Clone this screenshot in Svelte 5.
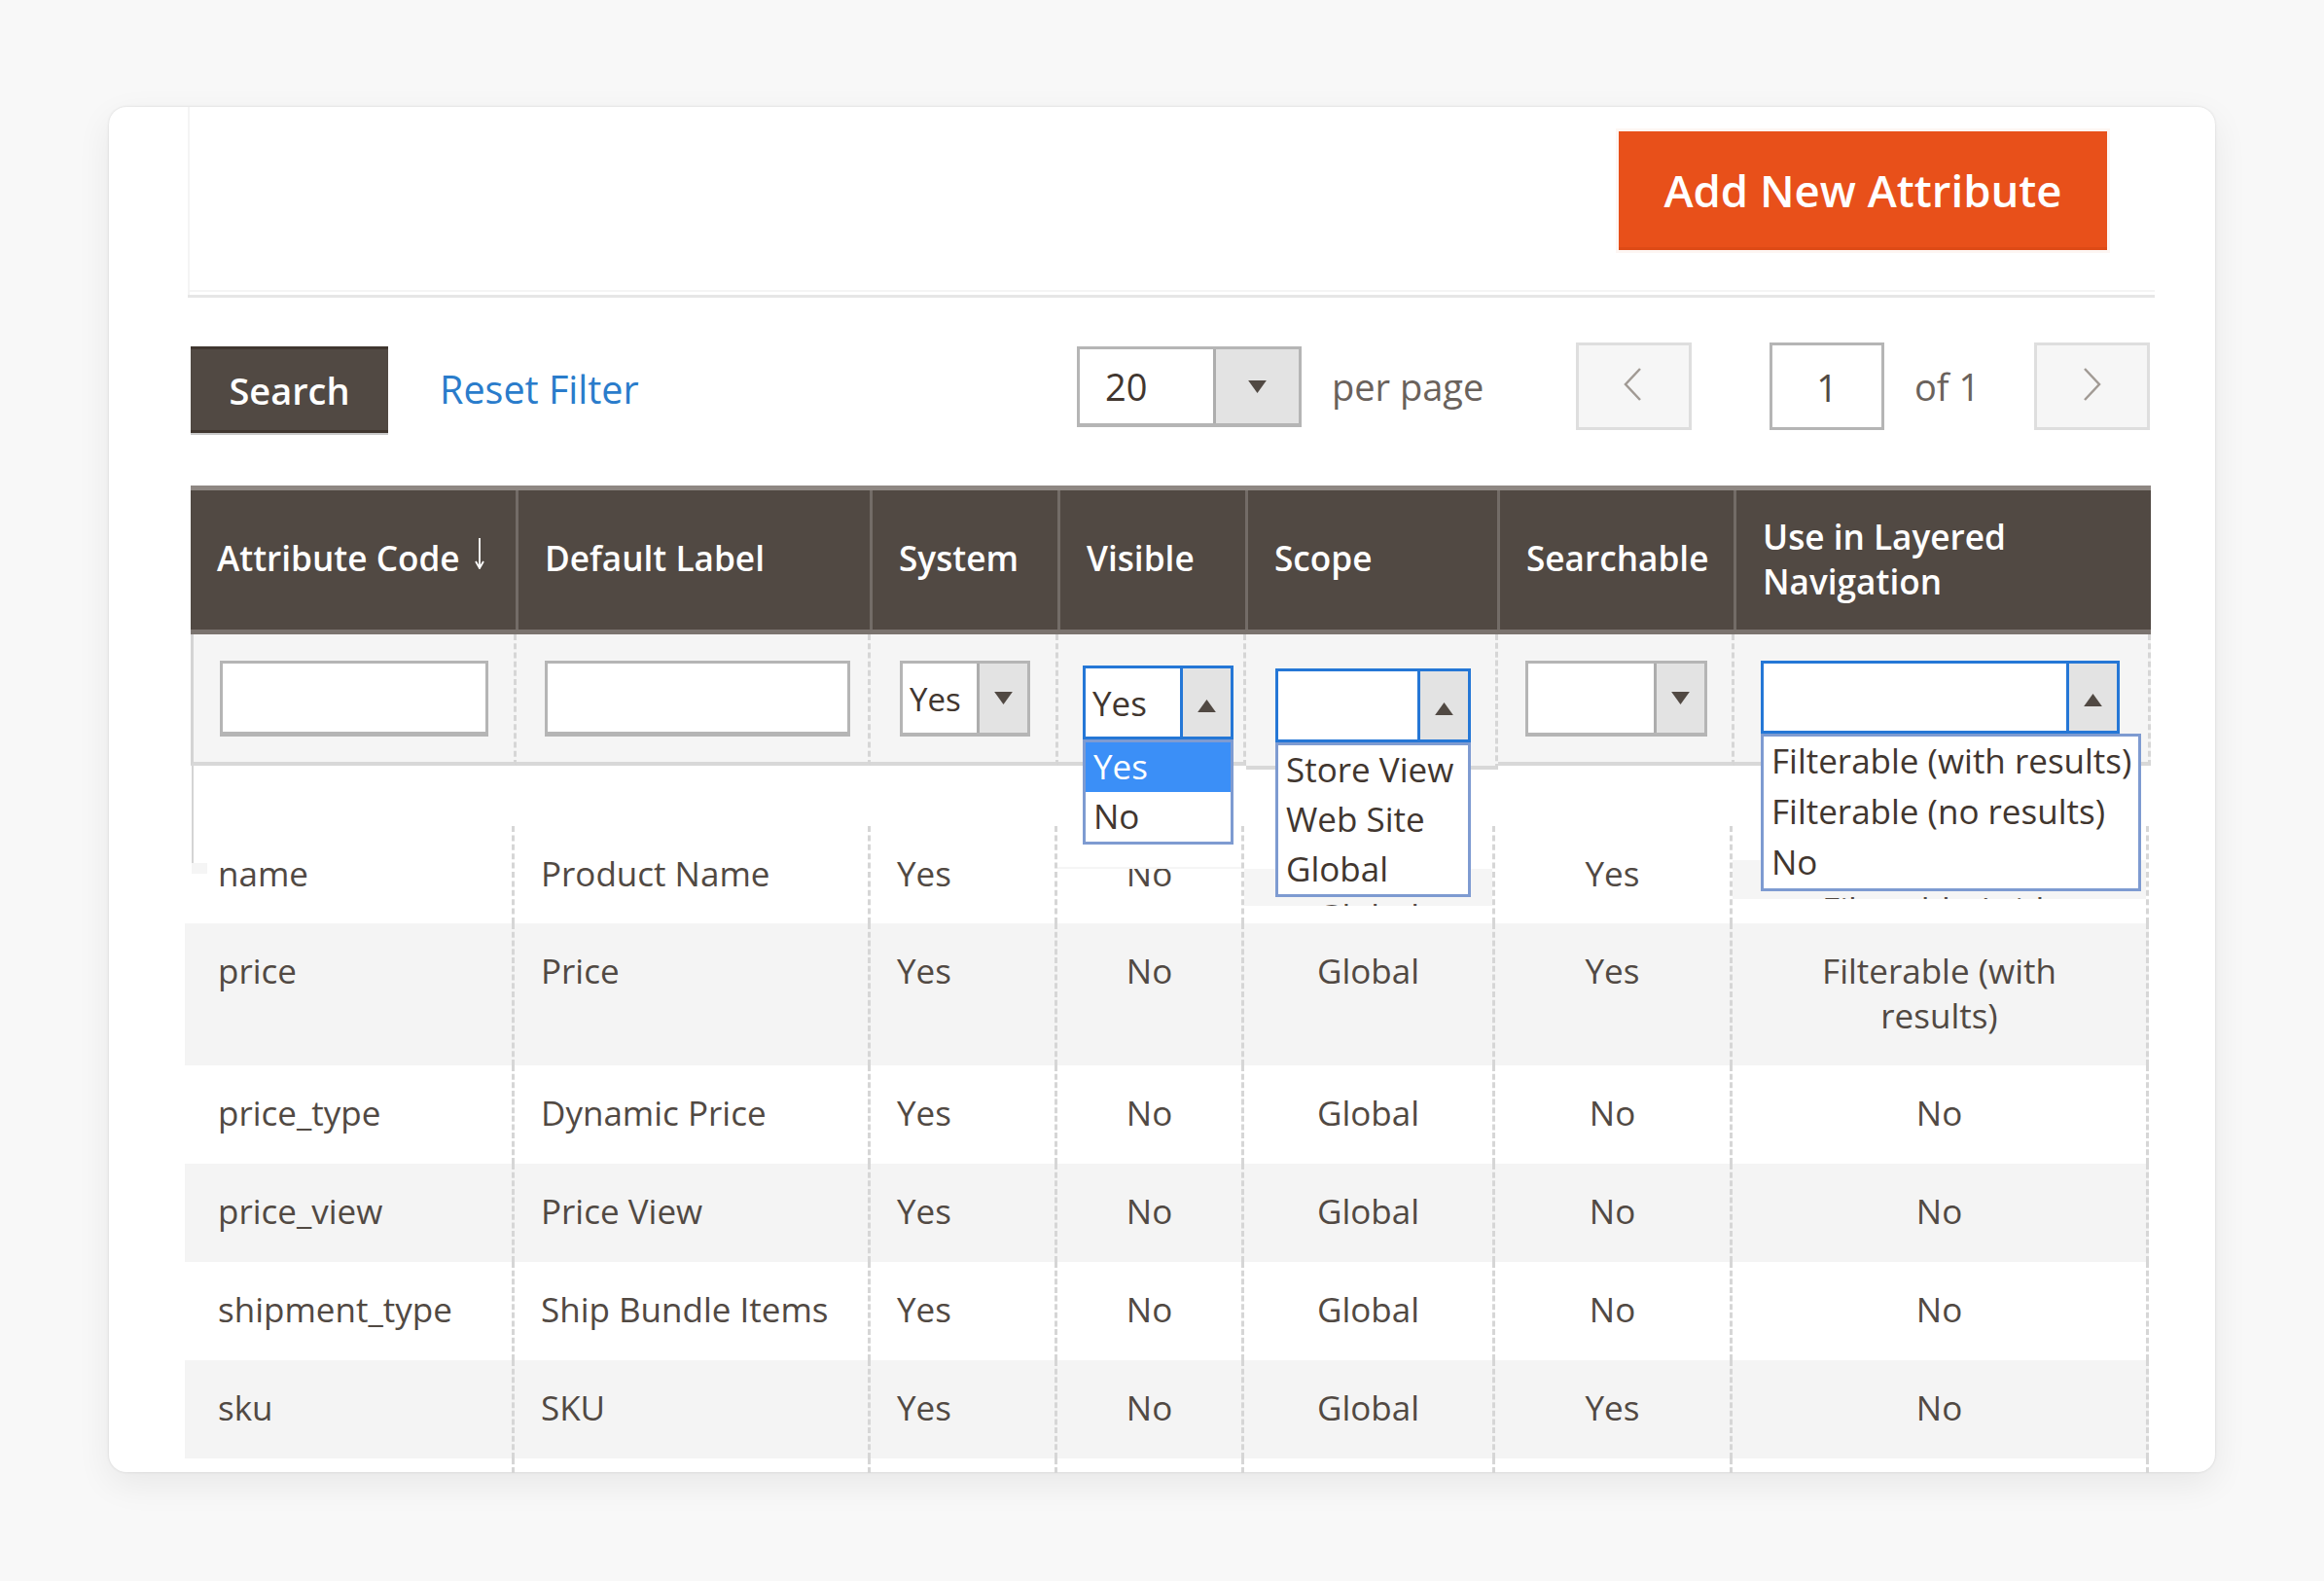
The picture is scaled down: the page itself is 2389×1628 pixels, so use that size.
<script>
  const columns = ['price', 'Price', 'Yes', 'No', 'Global', 'Yes', 'Filterable (with results)'];
  const rows = [
    { cls: 'r-price', cells: columns },
    { cls: 'r-std', cells: ['price_type', 'Dynamic Price', 'Yes', 'No', 'Global', 'No', 'No'] },
    { cls: 'r-std alt', cells: ['price_view', 'Price View', 'Yes', 'No', 'Global', 'No', 'No'] },
    { cls: 'r-std', cells: ['shipment_type', 'Ship Bundle Items', 'Yes', 'No', 'Global', 'No', 'No'] },
    { cls: 'r-std alt', cells: ['sku', 'SKU', 'Yes', 'No', 'Global', 'Yes', 'No'] }
  ];
</script>

{#snippet tri(up)}
  <svg class="tri" viewBox="0 0 22 16" aria-hidden="true">
    {#if up}<path d="M11 1 L21 15 H1 Z" />{:else}<path d="M1 1 H21 L11 15 Z" />{/if}
  </svg>
{/snippet}

<div class="page">
  <div class="card">
    <div class="head">
      <button class="add">Add New Attribute</button>
    </div>

    <div class="toolbar">
      <button class="search">Search</button>
      <span class="reset">Reset Filter</span>
      <div class="sel s-page">
        <span class="val">20</span>
        <span class="arrow">{@render tri(false)}</span>
      </div>
      <span class="perpage">per page</span>
      <span class="pager prev">
        <svg viewBox="0 0 20 34" aria-hidden="true"><path d="M18 1 L3 17 L18 33" /></svg>
      </span>
      <span class="pagenum">1</span>
      <span class="of">of 1</span>
      <span class="pager next">
        <svg viewBox="0 0 20 34" aria-hidden="true"><path d="M2 1 L17 17 L2 33" /></svg>
      </span>
    </div>

    <div class="grid thead">
      <div class="th">
        Attribute Code
        <svg class="sort" viewBox="0 0 12 32" aria-hidden="true"><path d="M6 0 V30 M2 24 L6 31 L10 24" /></svg>
      </div>
      <div class="th">Default Label</div>
      <div class="th">System</div>
      <div class="th">Visible</div>
      <div class="th">Scope</div>
      <div class="th">Searchable</div>
      <div class="th">Use in Layered<br />Navigation</div>
    </div>

    <div class="grid filters">
      <div class="fc f1"><span class="input i1"></span></div>
      <div class="fc f2"><span class="input i2"></span></div>
      <div class="fc f3">
        <div class="sel s-system"><span class="val">Yes</span><span class="arrow">{@render tri(false)}</span></div>
      </div>
      <div class="fc f4">
        <div class="sel open s-visible">
          <span class="val">Yes</span><span class="arrow">{@render tri(true)}</span>
          <ul class="drop">
            <li class="on">Yes</li>
            <li>No</li>
          </ul>
        </div>
      </div>
      <div class="fc f5">
        <div class="sel open s-scope">
          <span class="val"></span><span class="arrow">{@render tri(true)}</span>
          <ul class="drop">
            <li>Store View</li>
            <li>Web Site</li>
            <li>Global</li>
          </ul>
        </div>
      </div>
      <div class="fc f6">
        <div class="sel s-search"><span class="val"></span><span class="arrow">{@render tri(false)}</span></div>
      </div>
      <div class="fc f7">
        <div class="sel open s-layered">
          <span class="val"></span><span class="arrow">{@render tri(true)}</span>
          <ul class="drop">
            <li>Filterable (with results)</li>
            <li>Filterable (no results)</li>
            <li>No</li>
          </ul>
        </div>
      </div>
    </div>

    <div class="tbody">
      <div class="grid row r-first">
        <div class="td">name</div>
        <div class="td">Product Name</div>
        <div class="td">Yes</div>
        <div class="td ctr clipped"><span class="cover"></span>No</div>
        <div class="td ctr"><span class="band band-scope"><span>Global</span></span></div>
        <div class="td ctr">Yes</div>
        <div class="td ctr"><span class="band band-layer"><span>Filterable (with</span></span></div>
      </div>
      {#each rows as row}
        <div class="grid row {row.cls}">
          {#each row.cells as cell, i}
            <div class="td" class:ctr={i > 2}>{cell}</div>
          {/each}
        </div>
      {/each}
      <div class="grid row r-end">
        {#each columns as _}
          <div class="td"></div>
        {/each}
      </div>
    </div>
  </div>
</div>

<style>
  :global(body) {
    margin: 0;
    background: #fff;
  }
  .page {
    box-sizing: border-box;
    width: 2389px;
    height: 1625px;
    padding: 110px 0 0 112px;
    background: #f8f8f8;
    font-family: "Open Sans", "Liberation Sans", sans-serif;
    font-size: 35px;
    color: #514943;
    overflow: hidden;
  }
  .card {
    box-sizing: border-box;
    width: 2165px;
    height: 1403px;
    background: #fff;
    border-radius: 18px;
    box-shadow: 0 0 3px rgba(0, 0, 0, 0.12), 0 12px 36px rgba(0, 0, 0, 0.07);
  }
  .head {
    box-sizing: border-box;
    height: 196px;
    margin: 0 62px 0 81px;
    padding: 25px 49px 0 0;
    display: flex;
    justify-content: flex-end;
    align-items: flex-start;
    border-bottom: 3px solid #e6e6e6;
    box-shadow: inset 2px 0 0 #f4f4f4, inset 0 -3px 0 #fff, inset 0 -5px 0 #f4f4f4;
  }
  button {
    font-family: inherit;
    border: 0;
    padding: 0;
    color: #fff;
  }
  .add {
    width: 502px;
    height: 122px;
    background: #e8501a;
    border-bottom: 3px solid #dd4a16;
    box-shadow: 0 0 0 3px #fdf6f3;
    font-size: 45.5px;
    font-weight: 600;
  }
  .toolbar {
    height: 93px;
    margin: 46px 0 54px 84px;
    display: flex;
    align-items: flex-start;
  }
  .search {
    width: 203px;
    height: 89px;
    margin-top: 4px;
    background: #514943;
    border-top: 3px solid #40362f;
    border-bottom: 3px solid #40362f;
    box-shadow: 0 2px 0 #c9c9c9;
    font-size: 38px;
    font-weight: 600;
  }
  .reset {
    margin: 4px 0 0 53px;
    width: 655px;
    line-height: 89px;
    font-size: 39.5px;
    color: #2a7ccb;
  }
  .sel {
    box-sizing: border-box;
    position: relative;
    display: flex;
    background: #fff;
    border: 3px solid #b5b5b5;
    border-bottom-width: 4px;
    color: #41362f;
  }
  .s-page {
    width: 231px;
    height: 83px;
    margin-top: 4px;
    font-size: 38px;
  }
  .val {
    flex: 1;
    padding-left: 7px;
    line-height: 72px;
  }
  .s-page .val {
    padding-left: 26px;
    line-height: 76px;
  }
  .arrow {
    display: flex;
    align-items: center;
    justify-content: center;
    width: 49px;
    background: #e3e3e3;
    border-left: 3px solid #adadad;
  }
  .s-page .arrow {
    width: 85px;
  }
  .tri {
    width: 21px;
    height: 15px;
    fill: #514943;
  }
  .perpage {
    margin: 4px 0 0 31px;
    width: 251px;
    line-height: 83px;
    font-size: 38px;
    color: #6a625c;
  }
  .pager {
    box-sizing: border-box;
    width: 119px;
    height: 90px;
    display: flex;
    align-items: center;
    justify-content: center;
    background: #f6f6f6;
    border: 3px solid #dedede;
    padding-bottom: 4px;
  }
  .pager svg {
    width: 20px;
    height: 34px;
    fill: none;
    stroke: #a19a94;
    stroke-width: 2.5;
  }
  .prev {
    margin-right: 80px;
    padding-right: 4px;
  }
  .pagenum {
    box-sizing: border-box;
    width: 118px;
    height: 90px;
    line-height: 86px;
    text-align: center;
    background: #fff;
    border: 3px solid #b5b5b5;
    font-size: 38px;
  }
  .of {
    width: 154px;
    padding-left: 31px;
    box-sizing: border-box;
    line-height: 90px;
    font-size: 38px;
    color: #6a625c;
  }
  .grid {
    display: grid;
    grid-template-columns: 335px 364px 193px 193px 259px 243px 428px;
    margin-left: 84px;
    width: 2015px;
  }
  .thead {
    grid-template-columns: 337px 364px 193px 193px 259px 243px 426px;
    height: 153px;
    box-sizing: border-box;
    background: #514943;
    border-top: 5px solid #8e8782;
    border-bottom: 5px solid #7a736e;
  }
  .th {
    box-sizing: border-box;
    padding: 46px 0 0 27px;
    border-right: 3px solid #736c67;
    color: #fff;
    font-weight: 600;
    line-height: 46px;
    font-size: 35.2px;
    white-space: nowrap;
  }
  .th:last-child {
    padding-top: 24px;
    border-right: 0;
  }
  .sort {
    width: 12px;
    height: 32px;
    fill: none;
    stroke: #fff;
    stroke-width: 1.8;
    margin: 0 0 18px 5px;
    vertical-align: middle;
  }
  .filters {
    height: 135px;
    position: relative;
    z-index: 2;
  }
  .fc {
    box-sizing: border-box;
    padding-top: 27px;
    background: #f5f5f5;
    border-right: 3px dashed #d6d6d6;
    border-bottom: 4px solid #d8d8d8;
  }
  .fc:first-child {
    border-left: 3px solid #d4d4d4;
  }
  .f1 { padding-left: 27px; }
  .f2 { padding-left: 29px; }
  .f3 { padding-left: 30px; }
  .f4 { padding: 32px 0 0 25px; }
  .f5 { padding: 35px 0 0 30px; margin-bottom: -4px; }
  .f6 { padding-left: 28px; }
  .f7 { padding-left: 27px; }
  .input {
    box-sizing: border-box;
    display: block;
    height: 78px;
    background: #fff;
    border: 3px solid #b5b5b5;
    border-bottom-width: 5px;
  }
  .i1 { width: 276px; }
  .i2 { width: 314px; }
  .s-system { width: 134px; height: 78px; }
  .s-search { width: 187px; height: 78px; }
  .s-system, .s-system .val { font-size: 33px; }
  .s-system .val { line-height: 74px; }
  .open {
    border: 3px solid #2577d6;
    z-index: 3;
  }
  .open .arrow {
    border-left-color: #2577d6;
    padding-top: 6px;
    box-sizing: content-box;
  }
  .s-visible { width: 155px; height: 76px; }
  .s-scope { width: 201px; height: 76px; }
  .s-layered { width: 369px; height: 75px; }
  .drop {
    position: absolute;
    top: calc(100% + 3px);
    left: -3px;
    box-sizing: border-box;
    width: calc(100% + 6px);
    margin: 0;
    padding: 0;
    list-style: none;
    background: #fff;
    border: 3px solid #7e9bd1;
    font-size: 35px;
  }
  .s-layered .drop {
    width: 391px;
  }
  .drop li {
    height: 52px;
    line-height: 49px;
    padding-left: 8px;
    white-space: nowrap;
  }
  .s-visible li,
  .s-scope li {
    height: 51px;
  }
  .drop li.on {
    background: #3b8ff7;
    color: #fff;
  }
  .tbody {
    position: relative;
    padding-top: 62px;
  }
  .tbody::before {
    content: "";
    position: absolute;
    left: 85px;
    top: 0;
    width: 2px;
    height: 111px;
    background: #d4d4d4;
  }
  .tbody::after {
    content: "";
    position: absolute;
    left: 85px;
    top: 100px;
    width: 16px;
    height: 11px;
    background: #f5f5f5;
  }
  .row {
    margin-left: 78px;
    grid-template-columns: 339px 366px 192px 192px 258px 244px 428px;
    width: 2019px;
  }
  .r-first {
    height: 100px;
  }
  .r-price {
    height: 146px;
    background: #f4f4f4;
  }
  .r-std {
    height: 101px;
  }
  .alt {
    background: #f4f4f4;
  }
  .r-end {
    height: 15px;
  }
  .td {
    box-sizing: border-box;
    position: relative;
    padding: 26px 24px 0 27px;
    line-height: 46px;
    border-right: 3px dashed #d6d6d6;
  }
  .r-end .td {
    padding: 0;
  }
  .td:first-child {
    padding-left: 34px;
  }
  .ctr {
    text-align: center;
    padding-left: 60px;
    padding-right: 60px;
  }
  .band {
    position: absolute;
    left: 0;
    right: 0;
    overflow: hidden;
    background: #f5f5f5;
    text-align: center;
    white-space: nowrap;
  }
  .band span {
    display: block;
  }
  .band-scope {
    top: 44px;
    height: 38px;
  }
  .band-scope span {
    margin-top: 26px;
  }
  .band-layer {
    top: 35px;
    height: 40px;
  }
  .band-layer span {
    margin-top: 28px;
  }
  .clipped {
    overflow: hidden;
  }
  .cover {
    position: absolute;
    left: 0;
    right: 0;
    top: 0;
    height: 42px;
    background: #fff;
    border-bottom: 2px solid #f5f5f5;
  }
</style>
